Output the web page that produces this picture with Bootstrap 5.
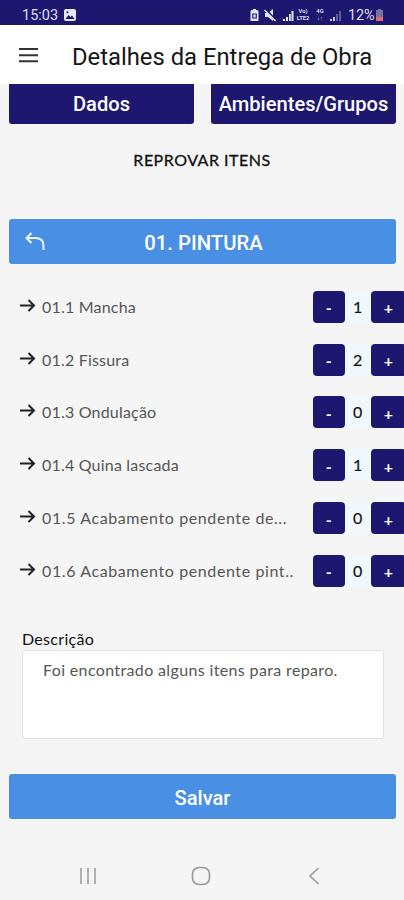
<!DOCTYPE html>
<html lang="pt-BR">
<head>
<meta charset="utf-8">
<meta name="viewport" content="width=device-width, initial-scale=1">
<title>Detalhes da Entrega de Obra</title>
<link href="https://cdn.jsdelivr.net/npm/bootstrap@5.3.0/dist/css/bootstrap.min.css" rel="stylesheet">
<style>
body{background:#f5f5f5;font-family:Roboto,sans-serif;color:#111;line-height:1;height:900px;overflow:hidden}
svg{display:block;flex:none}
.navy{background:#1d176f;color:#fff}
.sky{background:#4990e4;color:#fff}
.status{height:25px;padding:9px 20px 0 22px;color:#dddcf0;font-size:14.5px}
.status svg{margin-top:-1px}
.carrier{font-size:5.8px;line-height:7px;font-weight:700;text-align:center;width:16px;margin-top:-1px}
.carrier-4g{width:10px;margin:-1px 5px 0 4px}
.pct{width:27px;margin-left:6px;letter-spacing:-.1px}
.topbar{height:59px;padding-left:19px}
.title{font-size:23.8px;margin-left:34px;padding-top:6px;color:#161616;white-space:nowrap}
.tabs{padding:0 8px 0 9px;gap:17px}
.tab-btn{height:40px;border-radius:0 0 3px 3px;font-size:20.1px;font-weight:500;flex:1 1 0;min-width:0;border:0;padding:0;white-space:nowrap}
.section{font-family:Lato,sans-serif;font-size:16px;letter-spacing:.5px;margin-top:28px;height:17px;-webkit-text-stroke:.3px #111}
.wide{height:45px;margin:0 8px 0 9px;border-radius:3px;font-size:20.1px;font-weight:500}
.group{margin-top:50px;padding-left:16px;padding-right:18px}
.group span{padding-top:4px;font-size:20.3px}
.items{margin-top:16.5px}
.item-row{height:52.8px;padding-left:20px;font-family:Lato,sans-serif}
.item-name{font-size:16px;letter-spacing:.2px;color:#555;margin-left:6px;width:271px;white-space:nowrap}
.item-row:nth-child(n+5) .item-name{letter-spacing:.6px}
.stepper{height:32px;background:#f0f8fd}
.step{width:31.5px;height:32px;border-radius:4px;border:0;padding:2px 0 0;font:700 16px Lato,sans-serif}
.step-last{width:35px;margin-right:-2px}
.count{width:26.5px;font-size:16px;text-align:center;-webkit-text-stroke:.2px #222}
.desc-label{font-family:Lato,sans-serif;font-size:16px;letter-spacing:.3px;margin:34px 0 0 22px;height:19px}
.desc{height:89px;margin:0 20px 0 22px;background:#fff;border:1px solid #e2e2e2;border-radius:3px;padding:9px 20px;font:16px Lato,sans-serif;letter-spacing:.36px;color:#555;resize:none;width:362px}
.save{margin-top:35px;padding-top:3px}
.sysnav{margin-top:47px;padding-left:79px}
.nav-home{margin-left:94px}
.nav-back{margin-left:97px}
</style>
</head>
<body>
<div class="status navy d-flex align-items-start">
  <span>15:03</span>
  <svg class="ms-1" width="14" height="14" viewBox="0 0 14 14"><rect x="2" y="1" width="12" height="12" rx="2" fill="#e6e5f6"/><path d="M3.500 11l3-4 2 2 1.500-1.500L12.500 11z" fill="#1d176f"/><circle cx="5.500" cy="4.200" r="1" fill="#1d176f"/></svg>
  <svg class="ms-auto" width="46" height="15" viewBox="0 0 46 15" fill="#e6e5f6"><path d="M1.500 3.500q0-1.500 1.500-1.500h1V1h3v1h1q1.500 0 1.500 1.500V13h-8z"/><path d="M3.800 6h3.500v4H3.800z" fill="none" stroke="#1d176f" stroke-width="1.100"/><path d="M16 5h3l5-4v12l-5-4h-3z"/><path d="M17 1.500l10 11" stroke="#1d176f" stroke-width="2"/><path d="M15.500 2l11 11" stroke="#e6e5f6" stroke-width="1.400"/><path d="M34 11h2v2h-2zM37 9h2v4h-2zM40 6h1.800v7H40zM42.500 3h2v10h-2z"/></svg>
  <div class="carrier">Vo)<br>LTE2</div>
  <div class="carrier carrier-4g">4G<br>↓↑</div>
  <svg width="12" height="15" viewBox="0 0 12 15" fill="#c9c7e4"><path d="M0 11h2v2H0zM3 9h2v4H3z"/><path opacity=".4" d="M6 6h2v7H6zM9 3h2v10H9z"/></svg>
  <span class="pct">12%</span>
  <svg width="9" height="14" viewBox="0 0 9 14"><path d="M1 2h2V1h3v1h2v7H1z" fill="#77739f"/><path d="M1 9h7v4H1z" fill="#e36b6b"/></svg>
</div>
<header class="topbar bg-white d-flex align-items-center">
  <svg width="19" height="16" viewBox="0 0 19 16"><path d="M0 2h19M0 8.200h19M0 14.300h19" stroke="#333" stroke-width="1.900"/></svg>
  <span class="title">Detalhes da Entrega de Obra</span>
</header>
<main>
  <div class="tabs d-flex">
    <button class="tab-btn navy">Dados</button>
    <button class="tab-btn navy">Ambientes/Grupos</button>
  </div>
  <div class="section text-center">REPROVAR ITENS</div>
  <div class="wide group sky d-flex align-items-center">
    <svg width="20" height="20" viewBox="0 0 20 20" fill="none" stroke="#e9f3ff" stroke-width="2"><path d="M6.500 1L1.500 6l5 5M1.500 6h9q8 0 8 8v4"/></svg>
    <span class="flex-fill text-center pe-3">01. PINTURA</span>
  </div>
  <div class="items" id="items"></div>
  <label class="desc-label d-block" for="d">Descrição</label>
  <textarea id="d" class="desc d-block">Foi encontrado alguns itens para reparo.</textarea>
  <div class="wide save sky d-flex align-items-center justify-content-center">Salvar</div>
</main>
<nav class="sysnav d-flex align-items-center">
  <svg width="18" height="18" viewBox="0 0 18 18"><path d="M2 1v16M9 1v16M16 1v16" stroke="#999" stroke-width="1.500"/></svg>
  <svg class="nav-home" width="20" height="20" viewBox="0 0 20 20"><rect x="1.500" y="1.500" width="17" height="17" rx="6.500" fill="none" stroke="#999" stroke-width="1.600"/></svg>
  <svg class="nav-back" width="12" height="18" viewBox="0 0 12 18"><path d="M10.500 1L2 9l8.500 8" fill="none" stroke="#999" stroke-width="1.600"/></svg>
</nav>
<script>
const rows=[["01.1 Mancha",1],["01.2 Fissura",2],["01.3 Ondulação",0],["01.4 Quina lascada",1],["01.5 Acabamento pendente de...",0],["01.6 Acabamento pendente pint..",0]];
document.getElementById("items").innerHTML=rows.map(([n,c])=>`<div class="item-row d-flex align-items-center">
<svg class="mb-1" width="16" height="16" viewBox="0 0 16 16" fill="none" stroke="#222" stroke-width="2"><path d="M0 8.500h14M8.500 3l5.500 5.500L8.500 14"/></svg>
<span class="item-name">${n}</span>
<div class="stepper d-flex align-items-center"><button class="step navy">-</button><span class="count">${c}</span><button class="step step-last navy">+</button></div></div>`).join("");
</script>
<script src="https://cdn.jsdelivr.net/npm/bootstrap@5.3.0/dist/js/bootstrap.bundle.min.js"></script>
</body>
</html>
